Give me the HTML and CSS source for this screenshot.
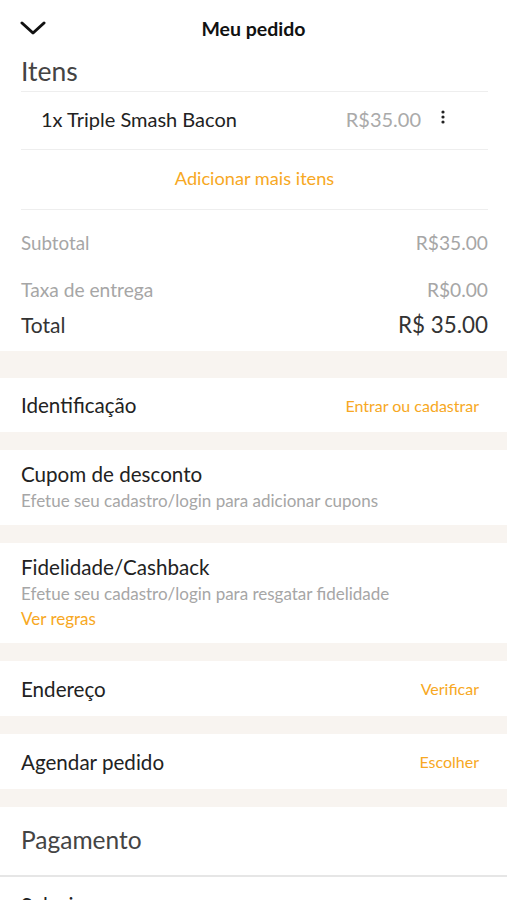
FILE: index.html
```html
<!DOCTYPE html>
<html lang="pt-BR">
<head>
    <meta charset="UTF-8">
    <meta name="viewport" content="width=device-width, initial-scale=1.0">
    <title>Meu pedido</title>
    <link rel="stylesheet" href="styles.css">
</head>

<body>
    <header class="topbar">
        <button class="back-btn" aria-label="Fechar">
            <svg width="26" height="16" viewBox="0 0 26 16">
                <path d="M2 3 L13 13 L24 3" fill="none" stroke="#111" stroke-width="3" stroke-linecap="round" stroke-linejoin="round"/>
            </svg>
        </button>
        <h1>Meu pedido</h1>
    </header>

    <section class="block items">
        <h2 class="section-title">Itens</h2>
        <div class="item-row">
            <span class="item-name">1x Triple Smash Bacon</span>
            <span class="item-price">R$35.00</span>
            <span class="item-menu">
                <svg width="4" height="14" viewBox="0 0 4 14">
                    <circle cx="2" cy="2" r="1.6" fill="#222"/>
                    <circle cx="2" cy="7" r="1.6" fill="#222"/>
                    <circle cx="2" cy="12" r="1.6" fill="#222"/>
                </svg>
            </span>
        </div>
        <div class="add-more">Adicionar mais itens</div>

        <div class="totals">
            <div class="line muted"><span class="sub">Subtotal</span><span>R$35.00</span></div>
            <div class="line muted"><span>Taxa de entrega</span><span>R$0.00</span></div>
            <div class="line total"><span>Total</span><span class="total-value">R$ 35.00</span></div>
        </div>
    </section>

    <div class="gap big"></div>

    <section class="block row first">
        <span class="row-title">Identificação</span>
        <span class="link">Entrar ou cadastrar</span>
    </section>

    <div class="gap"></div>

    <section class="block stack">
        <div class="row-title">Cupom de desconto</div>
        <div class="hint">Efetue seu cadastro/login para adicionar cupons</div>
    </section>

    <div class="gap"></div>

    <section class="block stack">
        <div class="row-title">Fidelidade/Cashback</div>
        <div class="hint">Efetue seu cadastro/login para resgatar fidelidade</div>
        <div class="link">Ver regras</div>
    </section>

    <div class="gap"></div>

    <section class="block row">
        <span class="row-title">Endereço</span>
        <span class="link">Verificar</span>
    </section>

    <div class="gap"></div>

    <section class="block row">
        <span class="row-title">Agendar pedido</span>
        <span class="link">Escolher</span>
    </section>

    <div class="gap"></div>

    <section class="payment">
        <h2 class="section-title pay-title">Pagamento</h2>
        <div class="block row pay-row">
            <span class="row-title">Selecionar</span>
            <span class="link">Incluir</span>
        </div>
    </section>
</body>
</html>
```

FILE: styles.css
```css
body {
    font-family: 'Lato', 'Noto Sans', sans-serif;
    background-color: #fff;
    color: #222;
    margin: 0;
    padding: 0;
}

.topbar {
    display: flex;
    align-items: center;
    justify-content: center;
    position: relative;
    height: 56px;
}

.topbar h1 {
    margin: 0;
    font-size: 19.5px;
    font-weight: bold;
    color: #111;
}

.back-btn {
    position: absolute;
    left: 20px;
    top: 20px;
    background: none;
    border: none;
    padding: 0;
    display: flex;
}

.block {
    background-color: #fff;
}

.items {
    padding: 0 19px 0 21px;
}

.section-title {
    margin: 0;
    font-size: 26.5px;
    font-weight: normal;
    color: #444;
    line-height: 30px;
}

.items .section-title {
    padding-bottom: 5px;
    border-bottom: 1px solid #eee;
}

.item-row {
    display: flex;
    align-items: center;
    height: 53px;
    padding: 0 0 4px 20px;
    border-bottom: 1px solid #eee;
    font-size: 20px;
}

.item-name {
    flex: 1;
    color: #222;
}

.item-price {
    color: #aaa;
}

.item-menu {
    display: flex;
    margin: -4px 43px 0 20px;
}

.add-more {
    text-align: center;
    color: #f7a823;
    font-size: 18.2px;
    height: 59px;
    line-height: 56px;
    border-bottom: 1px solid #eee;
}

.totals {
    padding: 21px 0 11px;
}

.line {
    display: flex;
    justify-content: space-between;
}

.line.muted {
    color: #a6a6a6;
    font-size: 19.2px;
    line-height: 24px;
    margin-bottom: 23px;
}

.line.muted .sub {
    font-size: 18.8px;
}

.line.muted + .line.muted {
    margin-bottom: 0;
}

.line.total {
    color: #333;
    font-size: 21px;
    line-height: 30px;
    margin-top: 8px;
}

.total-value {
    font-size: 22.4px;
}

.gap {
    height: 18px;
    background-color: #f8f4f0;
}

.gap.big {
    height: 27px;
}

.row {
    display: flex;
    align-items: center;
    justify-content: space-between;
    height: 55px;
    padding: 0 28px 0 21px;
}

.row.first {
    height: 54px;
}

.row-title {
    font-size: 20.6px;
    color: #222;
}

.link {
    color: #f7a823;
    font-size: 16px;
}

.stack {
    padding: 12px 21px 9px;
}

.stack .row-title {
    line-height: 24px;
}

.hint {
    color: #a6a6a6;
    font-size: 17px;
    line-height: 30px;
}

.stack .link {
    font-size: 17px;
    line-height: 20px;
    padding-bottom: 5px;
}

.pay-title {
    font-size: 24.5px;
    padding: 18px 21px 20px;
    border-bottom: 2px solid #e6e6e6;
}
```
